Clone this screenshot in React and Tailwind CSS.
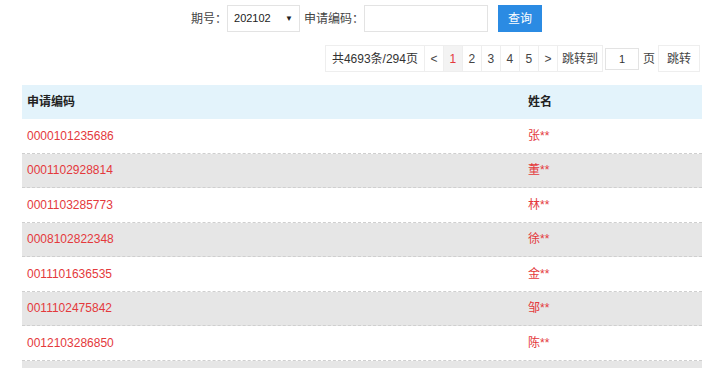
import { useState } from "react";

const rows = [
  { code: "0000101235686", name: "张**" },
  { code: "0001102928814", name: "董**" },
  { code: "0001103285773", name: "林**" },
  { code: "0008102822348", name: "徐**" },
  { code: "0011101636535", name: "金**" },
  { code: "0011102475842", name: "邹**" },
  { code: "0012103286850", name: "陈**" },
];

const font = { fontFamily: '"Liberation Sans", "Noto Sans CJK SC", sans-serif' };

export default function App() {
  const [code, setCode] = useState("");
  const [jump, setJump] = useState("1");

  return (
    <div className="w-[720px] h-[368px] overflow-hidden bg-white text-[12px] text-[#333]" style={font}>
      {/* search bar */}
      <div className="flex items-center h-[34px] pt-[3px] pl-[191px]">
        <span className="text-[12px] text-[#444]">期号：</span>
        <div className="flex items-center justify-between w-[73px] h-[27px] border border-[#e3e3e3] px-[6px] text-[11px] text-[#222]">
          <span>202102</span>
          <span className="text-[8px]">▼</span>
        </div>
        <span className="ml-[4px] text-[12px] text-[#444]">申请编码：</span>
        <input
          value={code}
          onChange={(e) => setCode(e.target.value)}
          className="w-[124px] h-[27px] border border-[#e3e3e3] outline-none px-2"
        />
        <button className="ml-[10px] w-[44px] h-[27px] bg-[#2b8be3] text-white text-[12px]">查询</button>
      </div>

      {/* pager */}
      <div className="flex justify-end items-center pr-[20px] mt-[11px] h-[27px] text-[12px]">
        <div className="flex items-center h-full border border-[#eee]">
          <span className="px-[6px] h-full flex items-center border-r border-[#eee]">共4693条/294页</span>
          {["<", "1", "2", "3", "4", "5", ">"].map((p) => (
            <span
              key={p}
              className={
                p === "1"
                  ? "w-[19px] h-full flex items-center justify-center border-r border-[#eee] bg-[#f3f3f3] text-[#e4393c]"
                  : "w-[19px] h-full flex items-center justify-center border-r border-[#eee] text-[#444]"
              }
            >
              {p}
            </span>
          ))}
          <span className="px-[4px] text-[#444]">跳转到</span>
        </div>
        <input
          value={jump}
          onChange={(e) => setJump(e.target.value)}
          className="ml-[2px] w-[34px] h-[22px] border border-[#e3e3e3] text-center text-[11px] outline-none"
        />
        <span className="ml-[4px] mr-[3px] text-[#444]">页</span>
        <span className="h-full px-[8px] flex items-center border border-[#eee] text-[#444]">跳转</span>
      </div>

      {/* table */}
      <div className="ml-[22px] mr-[18px] mt-[13px]">
        <div className="flex items-center h-[34px] bg-[#e3f3fb] font-bold text-[12px] text-[#222]">
          <div className="w-[506px] pl-[5px]">申请编码</div>
          <div className="flex-1">姓名</div>
        </div>
        {rows.map((r, i) => (
          <div
            key={r.code}
            className={
              i % 2
                ? "flex items-center h-[34.5px] bg-[#e6e6e6] border-b border-dashed border-[#cfcfcf] text-[#e4393c]"
                : "flex items-center h-[34.5px] bg-white border-b border-dashed border-[#cfcfcf] text-[#e4393c]"
            }
          >
            <div className="w-[506px] pl-[5px]">{r.code}</div>
            <div className="flex-1">{r.name}</div>
          </div>
        ))}
        <div className="h-[34.5px] bg-[#e6e6e6]" />
      </div>
    </div>
  );
}
